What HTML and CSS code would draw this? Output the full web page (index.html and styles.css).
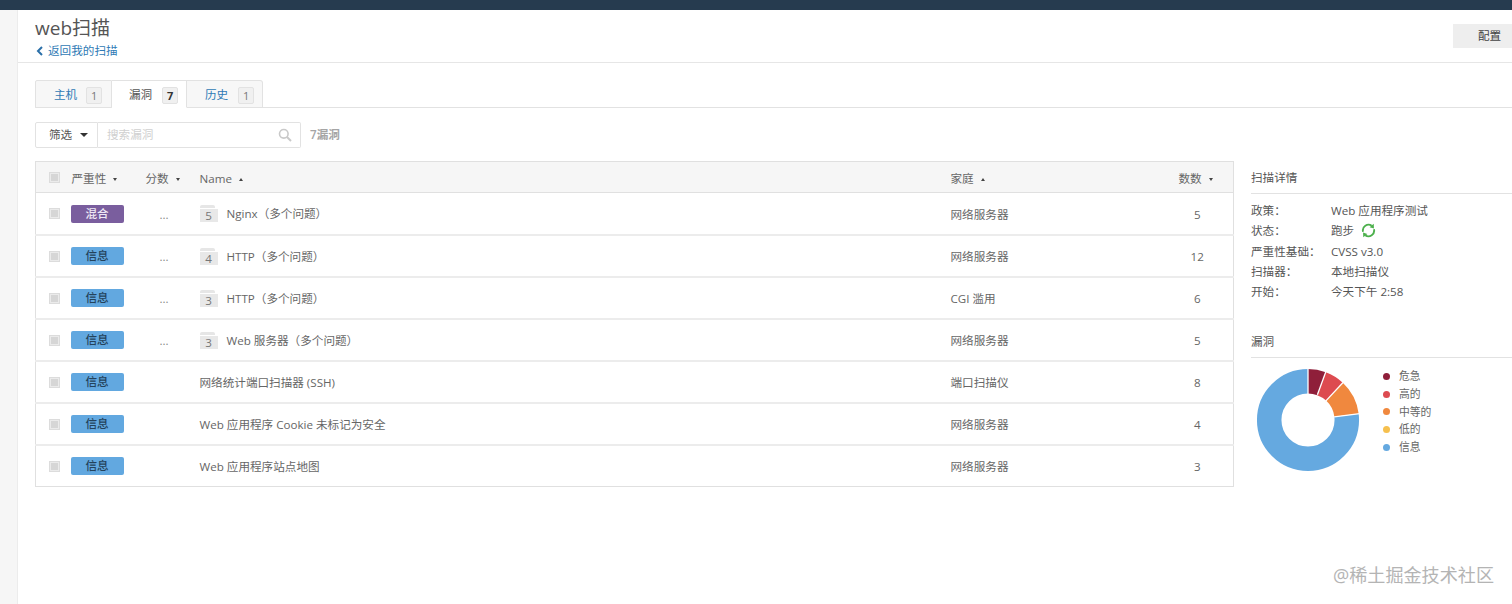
FILE: index.html
```html
<!DOCTYPE html>
<html lang="zh">
<head>
<meta charset="utf-8">
<title>web扫描</title>
<link rel="stylesheet" href="styles.css">
</head>
<body>
<div class="topbar"></div>
<div class="shell">
  <aside class="rail"></aside>
  <main class="main">
    <header class="head">
      <div class="head-text">
        <h1 class="title">web扫描</h1>
        <a class="back"><svg class="back-icon" viewBox="0 0 8 10" width="8" height="10"><path d="M6 1 2 5l4 4" fill="none" stroke="#2a6fa8" stroke-width="2"/></svg>返回我的扫描</a>
      </div>
      <div class="config">配置</div>
    </header>
    <div class="content">
      <nav class="tabs">
        <div class="tab"><span class="tab-link">主机</span><span class="count">1</span></div>
        <div class="tab tab-active"><span>漏洞</span><span class="count count-strong">7</span></div>
        <div class="tab"><span class="tab-link">历史</span><span class="count">1</span></div>
      </nav>
      <div class="filter">
        <div class="filter-btn">筛选<span class="caret"></span></div>
        <div class="search"><span>搜索漏洞</span>
          <svg viewBox="0 0 14 14" width="14" height="14"><circle cx="5.8" cy="5.8" r="4.3" fill="none" stroke="#c9c9c9" stroke-width="1.6"/><path d="M9 9l4 4" stroke="#c9c9c9" stroke-width="2"/></svg>
        </div>
        <div class="total">7漏洞</div>
      </div>
      <div class="columns">
        <table class="grid">
          <colgroup><col class="c1"><col class="c2"><col class="c3"><col class="c4"><col class="c5"><col class="c6"></colgroup>
          <thead>
            <tr>
              <th><span class="check"></span></th>
              <th>严重性<span class="sort down"></span></th>
              <th>分数<span class="sort down"></span></th>
              <th class="shift">Name<span class="sort up"></span></th>
              <th class="shift">家庭<span class="sort up"></span></th>
              <th class="shift">数数<span class="sort down"></span></th>
            </tr>
          </thead>
          <tbody>
            <tr><td><span class="check"></span></td><td><span class="badge mixed">混合</span></td><td class="dots">...</td><td class="shift"><span class="folder"><span class="folder-n">5</span></span>Nginx（多个问题）</td><td class="shift">网络服务器</td><td class="num">5</td></tr>
            <tr><td><span class="check"></span></td><td><span class="badge info">信息</span></td><td class="dots">...</td><td class="shift"><span class="folder"><span class="folder-n">4</span></span>HTTP（多个问题）</td><td class="shift">网络服务器</td><td class="num">12</td></tr>
            <tr><td><span class="check"></span></td><td><span class="badge info">信息</span></td><td class="dots">...</td><td class="shift"><span class="folder"><span class="folder-n">3</span></span>HTTP（多个问题）</td><td class="shift">CGI 滥用</td><td class="num">6</td></tr>
            <tr><td><span class="check"></span></td><td><span class="badge info">信息</span></td><td class="dots">...</td><td class="shift"><span class="folder"><span class="folder-n">3</span></span>Web 服务器（多个问题）</td><td class="shift">网络服务器</td><td class="num">5</td></tr>
            <tr><td><span class="check"></span></td><td><span class="badge info">信息</span></td><td></td><td class="shift">网络统计端口扫描器 (SSH)</td><td class="shift">端口扫描仪</td><td class="num">8</td></tr>
            <tr><td><span class="check"></span></td><td><span class="badge info">信息</span></td><td></td><td class="shift">Web 应用程序 Cookie 未标记为安全</td><td class="shift">网络服务器</td><td class="num">4</td></tr>
            <tr><td><span class="check"></span></td><td><span class="badge info">信息</span></td><td></td><td class="shift">Web 应用程序站点地图</td><td class="shift">网络服务器</td><td class="num">3</td></tr>
          </tbody>
        </table>
        <aside class="side">
          <h2 class="side-title">扫描详情</h2>
          <dl class="details">
            <dt>政策：</dt><dd>Web 应用程序测试</dd>
            <dt>状态：</dt><dd>跑步<svg class="spin" viewBox="0 0 16 16" width="15" height="15"><path d="M2.2 9.4A6 6 0 0 1 11.5 3M13.8 6.6A6 6 0 0 1 4.5 13" fill="none" stroke="#4cb04c" stroke-width="2"/><path d="M13.6 .8l.2 5-4.6-1.4zM2.4 15.2l-.2-5 4.6 1.4z" fill="#4cb04c"/></svg></dd>
            <dt>严重性基础：</dt><dd>CVSS v3.0</dd>
            <dt>扫描器：</dt><dd>本地扫描仪</dd>
            <dt>开始：</dt><dd>今天下午 2:58</dd>
          </dl>
          <h2 class="side-title second">漏洞</h2>
          <div class="chart">
            <svg class="donut" viewBox="0 0 104 104" width="104" height="104">
              <g fill="none" stroke-width="24.5" transform="rotate(-90 52 52)">
                <circle cx="52" cy="52" r="38.8" pathLength="360" stroke="#65a9e0" stroke-dasharray="277 360" stroke-dashoffset="-83"/>
                <circle cx="52" cy="52" r="38.8" pathLength="360" stroke="#f0883e" stroke-dasharray="40 360" stroke-dashoffset="-43"/>
                <circle cx="52" cy="52" r="38.8" pathLength="360" stroke="#dd4b50" stroke-dasharray="22.5 360" stroke-dashoffset="-20.5"/>
                <circle cx="52" cy="52" r="38.8" pathLength="360" stroke="#8f1f3a" stroke-dasharray="20.5 360"/>
              </g>
              <g stroke="#fff" stroke-width="1.3">
                <path d="M52 0v28"/>
                <path d="M70.2 2.8 61.4 26.7"/>
                <path d="M87.5 14 69.9 32.9"/>
                <path d="M103.7 45.7 78.2 48.8"/>
              </g>
            </svg>
            <ul class="legend">
              <li><i class="dot d1"></i>危急</li>
              <li><i class="dot d2"></i>高的</li>
              <li><i class="dot d3"></i>中等的</li>
              <li><i class="dot d4"></i>低的</li>
              <li><i class="dot d5"></i>信息</li>
            </ul>
          </div>
        </aside>
      </div>
    </div>
  </main>
</div>
<div class="watermark">@稀土掘金技术社区</div>
</body>
</html>
```
FILE: styles.css
```css
* { box-sizing: border-box; }
html, body { margin: 0; height: 100%; overflow: hidden; }
body {
  background: #fff;
  color: #555;
  font: 11.6px/1.3 "Open Sans", "Noto Sans CJK SC", sans-serif;
  display: flex;
  flex-direction: column;
}
.topbar { height: 10px; background: #263b4f; flex: none; }
.shell { display: flex; flex: 1; min-height: 0; }
.rail { width: 18px; flex: none; background: #f6f6f6; border-right: 1px solid #ececec; }
.main { flex: 1; min-width: 0; }

.head {
  height: 53px;
  border-bottom: 1px solid #e6e6e6;
  padding-left: 17px;
  display: flex;
  justify-content: space-between;
  align-items: flex-start;
}
.title { margin: 5px 0 0; font-size: 19px; line-height: 26px; font-weight: 400; color: #555; }
.back { display: flex; align-items: center; gap: 4px; margin-top: 2px; line-height: 15px; color: #2f7ab5; }
.back-icon { margin-left: 1px; }
.config {
  width: 59px;
  height: 24px;
  margin-top: 14px;
  padding-left: 25px;
  background: #eeeeee;
  color: #444;
  line-height: 24px;
}

.content { padding: 17px 0 0 17px; }
.tabs { display: flex; height: 28px; border-bottom: 1px solid #e2e2e2; }
.tab {
  width: 76px;
  height: 28px;
  display: flex;
  align-items: center;
  gap: 10px;
  padding: 2px 0 0 18px;
  background: #f7f7f7;
  border: 1px solid #e2e2e2;
  border-left-width: 0;
}
.tab:first-child { width: 77px; gap: 9px; border-left-width: 1px; border-top-left-radius: 2px; }
.tab:last-child { border-top-right-radius: 3px; }
.tab-active { width: 75px; padding-left: 17px; background: #fff; border-bottom-color: #fff; color: #555; }
.tab-link { color: #2f7ab5; }
.count {
  width: 16px;
  height: 17px;
  line-height: 15px;
  text-align: center;
  background: #f0f0f0;
  border: 1px solid #e2e2e2;
  border-radius: 2px;
  font-size: 11px;
  color: #777;
}
.count-strong { color: #333; font-weight: 700; }

.filter { display: flex; align-items: center; height: 26px; margin-top: 14px; }
.filter-btn {
  width: 63px;
  height: 26px;
  display: flex;
  align-items: center;
  gap: 8px;
  padding-left: 13px;
  border: 1px solid #e2e2e2;
  border-radius: 2px 0 0 2px;
  color: #555;
}
.caret { width: 0; height: 0; border: 4px solid transparent; border-top: 4px solid #333; border-bottom: 0; }
.search {
  width: 203px;
  height: 26px;
  display: flex;
  align-items: center;
  justify-content: space-between;
  padding: 0 8px 0 9px;
  border: 1px solid #e2e2e2;
  border-left: 0;
  border-radius: 0 2px 2px 0;
  color: #d0d0d0;
}
.total { margin-left: 9px; color: #a5a5a5; font-weight: 600; }

.columns { display: flex; align-items: flex-start; margin-top: 13px; }
.grid {
  width: 1198px;
  flex: none;
  table-layout: fixed;
  border-collapse: collapse;
  border: 1px solid #e0e0e0;
}
.c1 { width: 36px; }
.c2 { width: 74px; }
.c3 { width: 53px; }
.c4 { width: 751px; }
.c5 { width: 228px; }
.c6 { width: 56px; }
.grid th {
  height: 31px;
  padding: 4px 0 0;
  background: #f6f6f6;
  border-bottom: 1px solid #e0e0e0;
  text-align: left;
  font-weight: 400;
  color: #666;
}
.grid td { height: 42px; padding: 2px 0 0; border-bottom: 2px solid #ececec; color: #666; }
.grid tr:last-child td { border-bottom: 0; }
.grid .shift { padding-left: 1px; }
.check {
  display: block;
  width: 11px;
  height: 11px;
  margin: -1px 0 0 13px;
  background: #d6d6d6;
  border: 2px solid #ebebeb;
  outline: 1px solid #dcdcdc;
  outline-offset: -1px;
}
th .check { margin-top: -3px; }
.sort { display: inline-block; width: 0; height: 0; margin: 0 0 2px 7px; border: 2px solid transparent; }
.sort.down { border-top: 3px solid #444; border-bottom: 0; }
.sort.up { border-bottom: 3px solid #444; border-top: 0; }
.badge {
  display: block;
  width: 53px;
  height: 18px;
  margin: -1px 0 0 -1px;
  line-height: 18px;
  text-align: center;
  border-radius: 2px;
  font-weight: 500;
}
.badge.info { background: #62a8e0; color: #24435c; }
.badge.mixed { background: #7a5e9e; color: #efe9f5; }
.grid .dots { padding-left: 14px; color: #888; }
.grid .num { padding-right: 16px; text-align: center; }
.folder {
  display: inline-block;
  position: relative;
  width: 18px;
  height: 13px;
  margin-right: 9px;
  vertical-align: -2px;
  background: #e8e8e8;
  text-align: center;
}
.folder::before {
  content: "";
  position: absolute;
  left: 0;
  top: -4px;
  width: 15px;
  height: 3px;
  background: #e6e6e6;
  border-radius: 2px 2px 0 0;
}
.folder-n { display: block; line-height: 13px; color: #777; }

.side { flex: 1; margin-left: 17px; min-width: 0; }
.side-title {
  margin: 0;
  height: 33px;
  font-size: 11.6px;
  line-height: 34px;
  font-weight: 400;
  color: #555;
  border-bottom: 1px solid #e2e2e2;
}
.second { margin-top: 25.5px; height: 31px; line-height: 30px; }
.details {
  display: grid;
  grid-template-columns: 80px 1fr;
  grid-auto-rows: 20.3px;
  margin: 6.5px 0 0;
  align-items: center;
}
.details dt, .details dd { margin: 0; color: #555; }
.details dd { display: flex; align-items: center; }
.spin { margin-left: 7px; }
.chart { display: flex; align-items: flex-start; }
.donut { margin: 10px 0 0 5px; flex: none; }
.legend { list-style: none; margin: 9px 0 0 23px; padding: 0; }
.legend li { display: flex; align-items: center; height: 17.7px; color: #666; font-size: 10.8px; }
.dot { width: 7px; height: 7px; border-radius: 50%; margin-right: 9px; }
.d1 { background: #8f1f3a; }
.d2 { background: #dd4b50; }
.d3 { background: #f0883e; }
.d4 { background: #f6c04e; }
.d5 { background: #65a9e0; }

.watermark {
  position: absolute;
  right: 18px;
  bottom: 17px;
  font-size: 18.1px;
  line-height: 24px;
  color: #b4b4b4;
}
```
